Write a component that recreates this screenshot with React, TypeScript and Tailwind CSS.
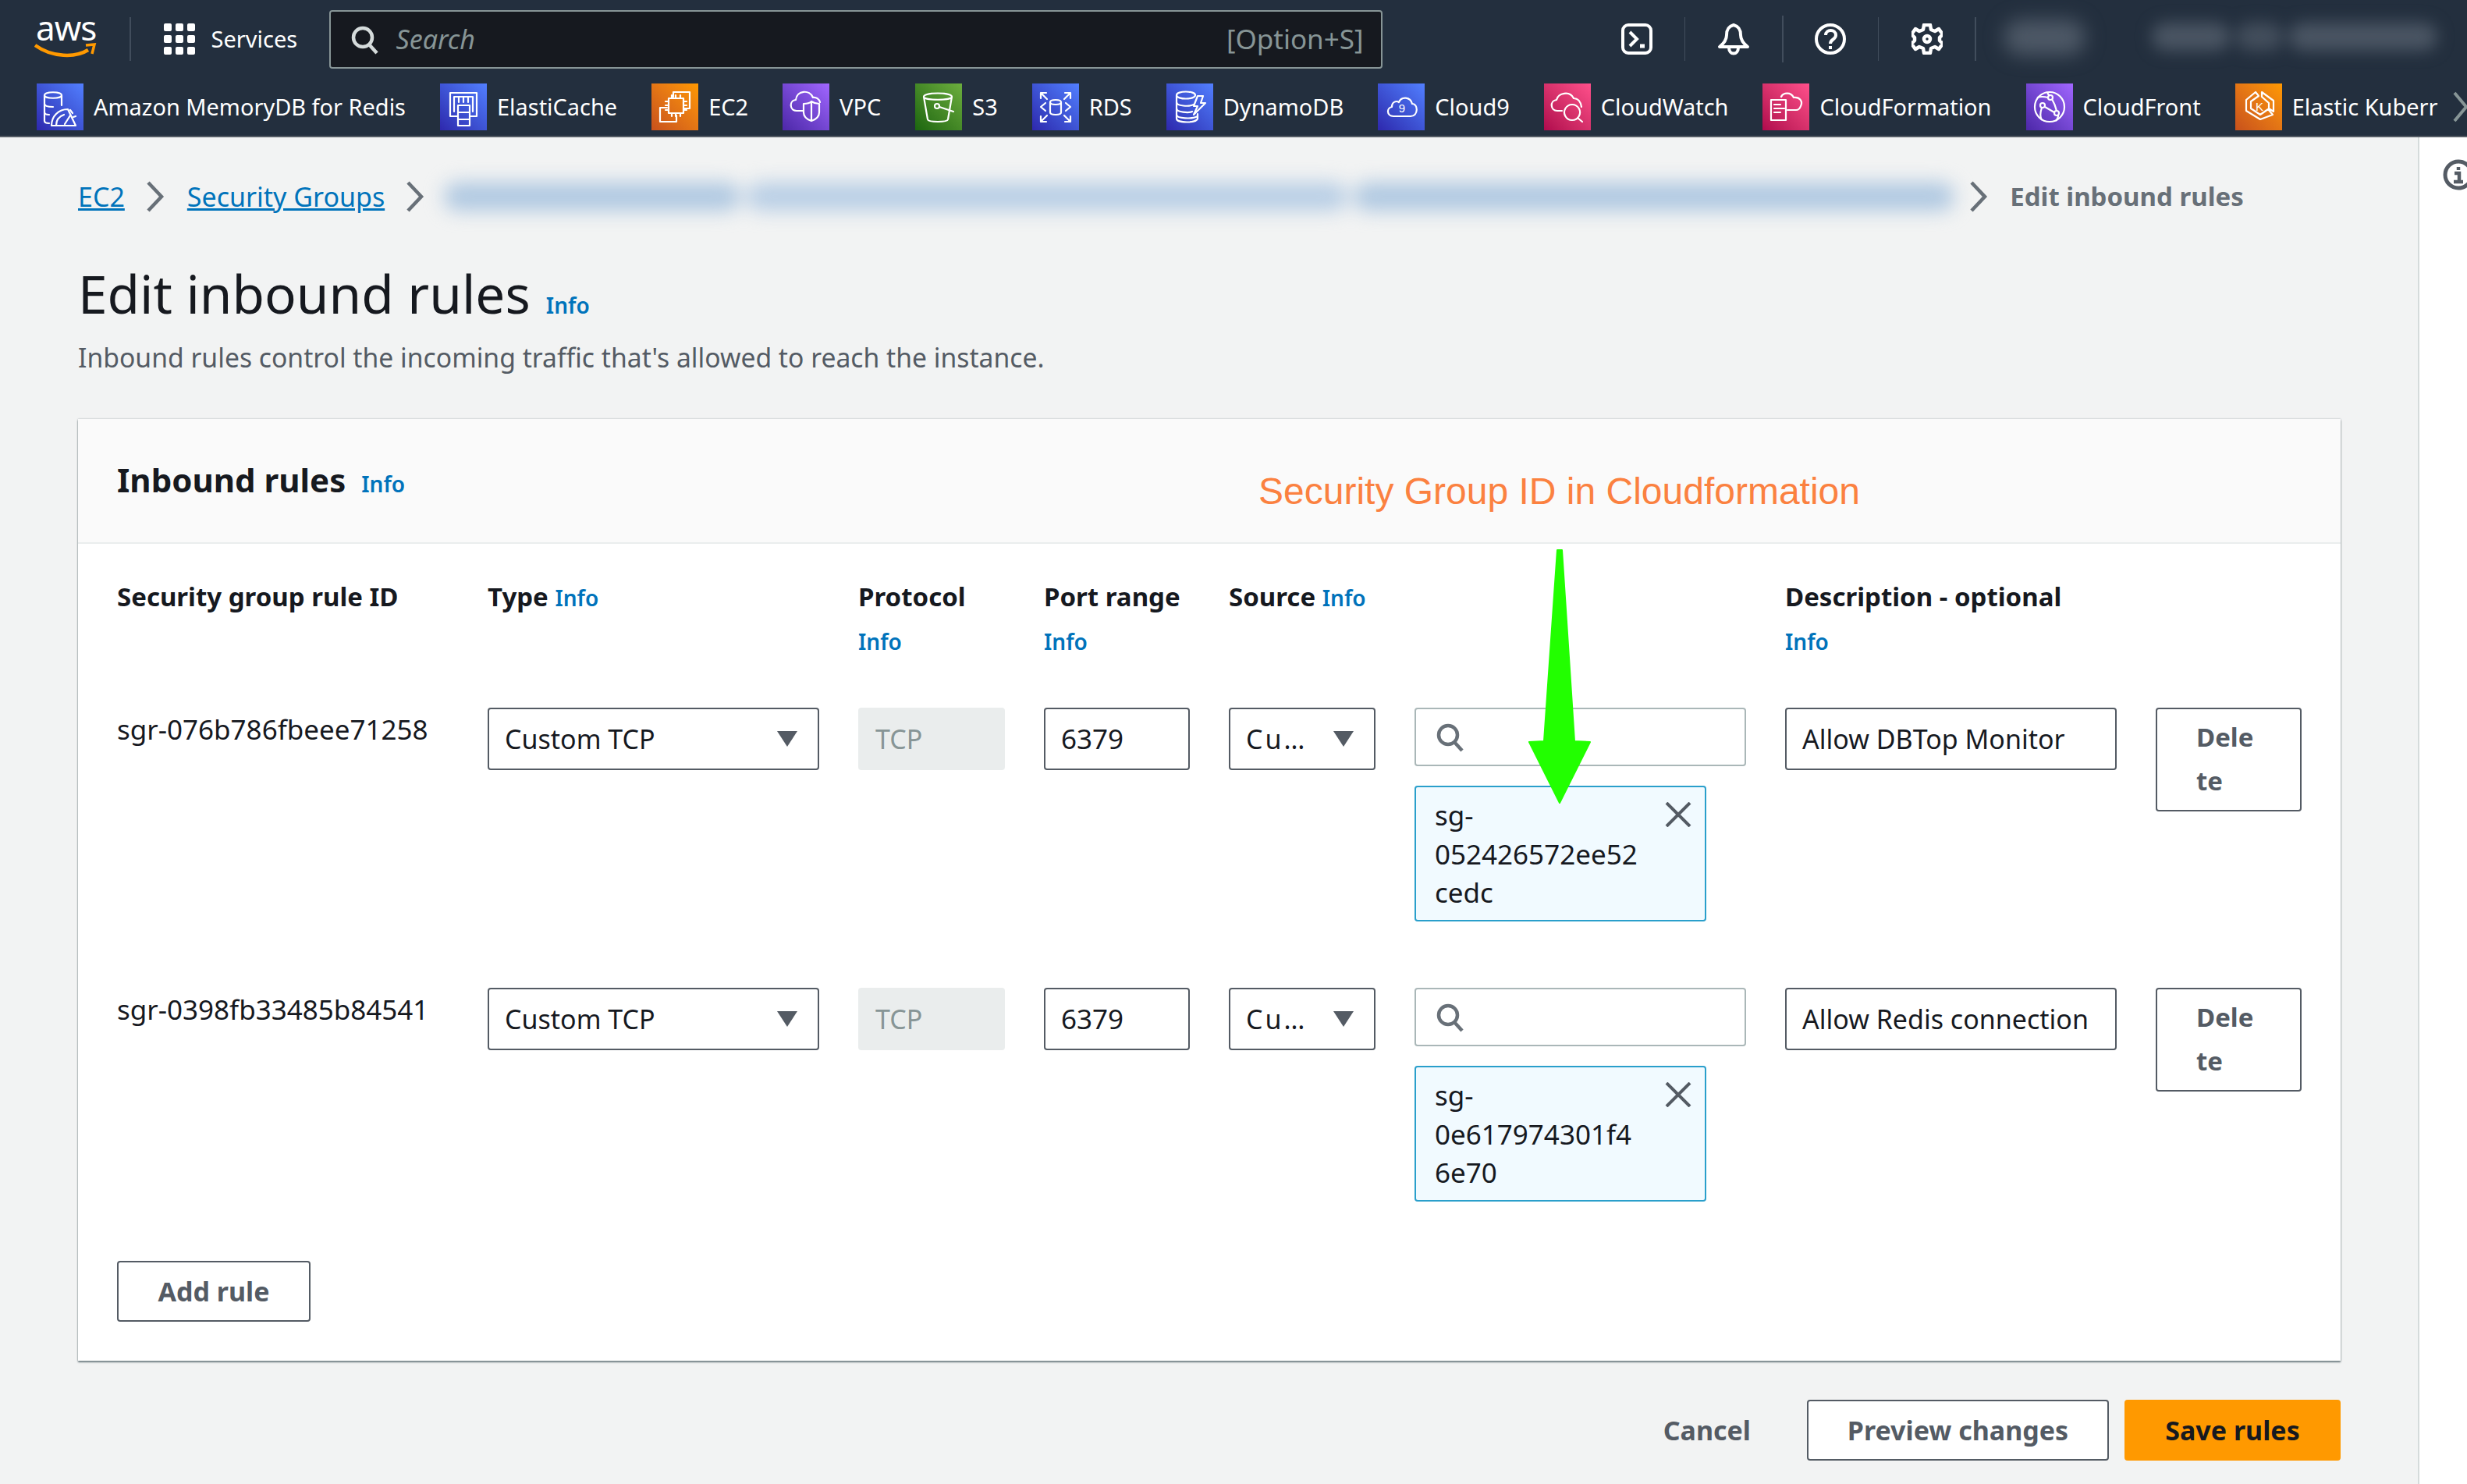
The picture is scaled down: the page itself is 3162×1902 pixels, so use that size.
import React from "react";

const cols = "grid grid-cols-[425px_425px_188px_187px_188px_425px_425px_187px] gap-x-[50px]";

const Info = ({ className = "" }: { className?: string }) => (
  <span className={`text-[#0073bb] text-[28px] font-semibold ${className}`}>Info</span>
);

const Chevron = ({ color = "#687078" }: { color?: string }) => (
  <svg width="24" height="40" viewBox="0 0 24 40" fill="none" stroke={color} strokeWidth="4.5" className="shrink-0">
    <path d="M3 2l17 18L3 38" />
  </svg>
);

const svc = (d: string[], extra?: React.ReactNode) => (
  <svg width="60" height="60" viewBox="0 0 60 60" fill="none" stroke="#fff" strokeWidth="2.2" strokeLinejoin="round" strokeLinecap="round">
    {d.map((p, i) => (
      <path key={i} d={p} />
    ))}
    {extra}
  </svg>
);

const blue = "bg-linear-to-tr from-[#2e27ad] to-[#527fff]";
const orange = "bg-linear-to-tr from-[#c8511b] to-[#ff9900]";
const purple = "bg-linear-to-tr from-[#4d27a8] to-[#a166ff]";
const green = "bg-linear-to-tr from-[#1b660f] to-[#6cae3e]";
const pink = "bg-linear-to-tr from-[#b0084d] to-[#ff4f8b]";

const iconLabel = (t: string, x: number, y: number, size: number) => (
  <text x={x} y={y} fontSize={size} fill="#fff" stroke="none" textAnchor="middle" fontFamily="Liberation Sans, sans-serif">
    {t}
  </text>
);

const services = [
  {
    name: "Amazon MemoryDB for Redis",
    bg: blue,
    icon: svc([
      "M10 15c0-5 22-5 22 0v13M10 15c0 5 22 5 22 0M10 15v33c0 2 3 3 6 3",
      "M10 26c0 3 6 4 11 4M10 37c0 2 3 3 6 3",
      "M19 54c0-12 9-21 21-21l10 21zM19 54h31M25 54c0-7 4-12 10-14",
      "M36 52l7-11M43 34l3 4M47 43l3-1",
    ]),
  },
  {
    name: "ElastiCache",
    bg: blue,
    icon: svc([
      "M13 42V12h34v30h-8M13 42h9M18 36V17h24v19",
      "M24 17v7M30 17v7M36 17v7",
      "M23 28h15v26H23zM23 37h15M23 46h15",
    ]),
  },
  {
    name: "EC2",
    bg: orange,
    icon: svc([
      "M28 17v-6h21v21h-7M20 31h-9v18h21v-8",
      "M22 19h19v19H22zM26 15v4M31 15v4M37 15v4M26 38v4M31 38v4M37 38v4M18 23h4M18 28h4M18 34h4M41 23h4M41 28h4M41 34h4",
    ]),
  },
  {
    name: "VPC",
    bg: purple,
    icon: svc([
      "M26 35h-8c-9 0-10-13-1-14 1-12 18-14 22-3 4-1 8 2 9 6",
      "M27 26c4 0 8-1 10-3 3 2 6 3 10 3v11c0 6-4 9-10 11-6-2-10-5-10-11zM37 23v25",
    ]),
  },
  {
    name: "S3",
    bg: green,
    icon: svc(
      ["M11 17c0-6 36-6 36 0l-5 29c-1 4-25 4-26 0zM11 17c0 5 36 5 36 0", "M31 30l18 6"],
      <circle cx="28" cy="29" r="3" />
    ),
  },
  {
    name: "RDS",
    bg: blue,
    icon: svc([
      "M11 12l8 8M11 12v7M11 12h7M49 12l-8 8M49 12v7M49 12h-7M11 49l8-8M11 49v-7M11 49h7M49 49l-8-8M49 49v-7M49 49h-7",
      "M23 24c0-4 14-4 14 0v13c0 4-14 4-14 0zM23 24c0 4 14 4 14 0",
      "M17 25l-6 5 6 5M43 25l6 5-6 5",
    ]),
  },
  {
    name: "DynamoDB",
    bg: blue,
    icon: svc([
      "M13 15c0-6 24-6 24 0s-24 6-24 0zM13 15v30c0 6 26 6 27 0v-6",
      "M13 24c0 5 16 6 22 3M13 32c0 5 16 6 20 4M13 40c0 5 20 6 27 2",
      "M40 16l-5 13h5l-5 11 15-15h-6l3-9z",
    ]),
  },
  {
    name: "Cloud9",
    bg: blue,
    icon: svc(
      ["M20 42c-9 0-9-11-2-12 0-7 6-8 9-6 3-8 15-7 17 2 8 0 8 16-2 16z"],
      iconLabel("9", 31, 37, 15)
    ),
  },
  {
    name: "CloudWatch",
    bg: pink,
    icon: svc([
      "M23 35h-6c-9 0-10-13-1-14 2-9 17-12 22-2 6 0 9 5 10 11",
      "M36 27a10 10 0 1 0 .1 0zM43 44l6 5",
    ]),
  },
  {
    name: "CloudFormation",
    bg: pink,
    icon: svc([
      "M11 21h19v26H11zM15 27h8M15 32h13M15 37h8",
      "M24 17c2-5 12-7 16 1 8-1 12 5 9 11-1 3-3 5-6 5H32",
    ]),
  },
  {
    name: "CloudFront",
    bg: purple,
    icon: (
      <svg width="60" height="60" viewBox="0 0 60 60" fill="none" stroke="#fff" strokeWidth="2.2">
        <circle cx="30" cy="30" r="19" />
        <path d="M14 18c6-2 10-1 14 0M27 12l3 4M33 20c3 5 5 11 6 15M24 30l12 7M20 31c-2 6-3 11 0 16M41 41c0 3-1 5-3 7" />
        <circle cx="31" cy="18" r="3" />
        <circle cx="21" cy="28" r="3" />
        <circle cx="39" cy="38" r="3" />
      </svg>
    ),
  },
  {
    name: "Elastic Kuberr",
    bg: orange,
    icon: svc(
      ["M26 11L14 21v14l18 11 16-6-6-7-10 7-12-8v-9l10-7zM34 11l15 11v14l-6-4v-7l-9-8z"],
      iconLabel("K", 31, 35, 15)
    ),
  },
];

const Divider = ({ tall = false }: { tall?: boolean }) => (
  <div className={`w-[1.5px] bg-[#414d5c] shrink-0 ${tall ? "h-[60px]" : "h-[56px]"}`} />
);

const TopBar = () => (
  <div className="h-[176px] bg-[#232f3e] border-b-2 border-[#545b64] shrink-0 overflow-hidden text-white">
    <div className="h-[88px] pt-[13px] flex items-start">
      <div className="w-[75px] ml-[46px] h-[62px] relative shrink-0 mt-[4px]">
        <div className="text-[44px] leading-[36px] text-center tracking-[-1px]">aws</div>
        <svg width="80" height="20" viewBox="0 0 80 20" fill="none" className="absolute left-[-2px] top-[38px]">
          <path d="M1 3c22 16 52 16 68 6" stroke="#ff9900" strokeWidth="4.5" />
          <path d="M66 3l11-1-3 12" stroke="#ff9900" strokeWidth="3.5" />
        </svg>
      </div>
      <div className="ml-[45px] mt-[9px]"><Divider /></div>
      <svg width="40" height="40" viewBox="0 0 40 40" fill="#fff" className="ml-[42px] mt-[17px] shrink-0">
        {[0, 15, 30].map((y) =>
          [0, 15, 30].map((x) => <rect key={`${x}-${y}`} x={x} y={y} width="10" height="10" rx="2" />)
        )}
      </svg>
      <div className="ml-[21px] mt-[17px] text-[29px] leading-[40px] w-[112px] whitespace-nowrap">Services</div>
      <div className="ml-[39px] w-[1350px] h-[75px] bg-[#16191f] border-2 border-[#879596] rounded-[4px] flex items-center pl-[26px] pr-[22px] shrink-0">
        <svg width="36" height="38" viewBox="0 0 36 38" fill="none" stroke="#d5dbdb" strokeWidth="4.5">
          <circle cx="15" cy="16" r="12" />
          <path d="M23 25l10 11" />
        </svg>
        <span className="ml-[22px] text-[#879596] text-[34px] italic">Search</span>
        <span className="ml-auto text-[#879596] text-[35px]">[Option+S]</span>
      </div>
      <svg width="40" height="40" viewBox="0 0 40 40" fill="none" stroke="#fff" strokeWidth="4" className="ml-[306px] mt-[17px] shrink-0">
        <rect x="2" y="2" width="36" height="36" rx="7" />
        <path d="M11 11l9 9-9 9" />
        <path d="M24 29h6" strokeWidth="5" />
      </svg>
      <div className="ml-[41px] mt-[9px]"><Divider /></div>
      <svg width="42" height="42" viewBox="0 0 42 42" fill="none" stroke="#fff" strokeWidth="4" strokeLinejoin="round" className="ml-[41px] mt-[16px] shrink-0">
        <path d="M21 3c-7 2-9 6-9 13 0 7-4 11-9 15h36c-5-4-9-8-9-15 0-7-2-11-9-13z" />
        <path d="M15 32c0 10 12 10 12 0" />
      </svg>
      <div className="ml-[41px] mt-[7px]"><Divider tall /></div>
      <svg width="40" height="40" viewBox="0 0 40 40" fill="none" stroke="#fff" strokeWidth="4" className="ml-[40px] mt-[17px] shrink-0">
        <circle cx="20" cy="20" r="18" />
        <path d="M14 15c0-8 13-8 13 0 0 6-7 5-7 11" />
        <path d="M20 29v4" />
      </svg>
      <div className="ml-[41px] mt-[9px]"><Divider /></div>
      <svg width="40" height="40" viewBox="0 0 40 40" fill="none" stroke="#fff" strokeWidth="4.5" strokeLinejoin="round" className="ml-[42px] mt-[17px] shrink-0">
        <path d="M16 2h8l1 6 5 2 5-3 5 7-4 4v4l4 4-5 7-5-3-5 2-1 6h-8l-1-6-5-2-5 3-5-7 4-4v-4l-4-4 5-7 5 3 5-2z" />
        <circle cx="20" cy="20" r="4" />
      </svg>
      <div className="ml-[41px] mt-[9px]"><Divider /></div>
      <div className="ml-[35px] mt-[12px] w-[105px] h-[46px] rounded-full bg-[#4d5866] blur-[12px] shrink-0" />
      <div className="ml-[85px] mt-[16px] flex gap-[8px] shrink-0 blur-[10px]">
        <div className="w-[100px] h-[36px] rounded-full bg-[#4a5563]" />
        <div className="w-[60px] h-[36px] rounded-full bg-[#434e5c]" />
        <div className="w-[190px] h-[36px] rounded-full bg-[#4a5563]" />
      </div>
    </div>
    <div className="relative h-[86px] pt-[19px] pl-[47px] flex items-start gap-[44px] overflow-hidden">
      {services.map((s) => (
        <div key={s.name} className="flex items-center gap-[13px] h-[60px] shrink-0">
          <div className={`w-[60px] h-[60px] shrink-0 ${s.bg}`}>{s.icon}</div>
          <span className="text-[28.95px] leading-[40px] whitespace-nowrap">{s.name}</span>
        </div>
      ))}
      <div className="absolute right-[-2px] top-[29px]">
        <svg width="20" height="40" viewBox="0 0 20 40" fill="none" stroke="#879596" strokeWidth="4">
          <path d="M2 2l15 18L2 38" />
        </svg>
      </div>
    </div>
  </div>
);

const Select = ({ label, spaced = false }: { label: string; spaced?: boolean }) => (
  <div className="h-[80px] border-2 border-[#545b64] rounded-[4px] bg-white flex items-center pl-[20px] pr-[26px] text-[34px] text-[#16191f]">
    <span className={`whitespace-nowrap ${spaced ? "tracking-[3px]" : ""}`}>{label}</span>
    <svg width="26" height="20" viewBox="0 0 26 20" fill="#545b64" className="ml-auto shrink-0">
      <path d="M0 0h26L13 20z" />
    </svg>
  </div>
);

const TextBox = ({ value, size }: { value: string; size: string }) => (
  <div className={`h-[80px] border-2 border-[#545b64] rounded-[4px] bg-white flex items-center px-[20px] ${size} text-[#16191f] whitespace-nowrap overflow-hidden`}>
    {value}
  </div>
);

const Rule = ({ id, port, tag, desc }: { id: string; port: string; tag: string[]; desc: string }) => (
  <div className={`${cols} items-start`}>
    <div className="text-[35px] leading-[56px] text-[#16191f] whitespace-nowrap">{id}</div>
    <Select label="Custom TCP" />
    <div className="h-[80px] rounded-[4px] bg-[#eaeded] flex items-center px-[22px] text-[34px] text-[#879596]">TCP</div>
    <TextBox value={port} size="text-[35px]" />
    <Select label="Cu…" spaced />
    <div>
      <div className="h-[75px] border-2 border-[#aab7b8] rounded-[4px] bg-white flex items-center pl-[26px]">
        <svg width="36" height="38" viewBox="0 0 36 38" fill="none" stroke="#687078" strokeWidth="4.5">
          <circle cx="15" cy="16" r="12" />
          <path d="M23 25l10 11" />
        </svg>
      </div>
      <div className="relative mt-[25px] w-[374px] h-[174px] border-2 border-[#2a9fcb] rounded-[4px] bg-[#f1faff] pl-[24px] pt-[11px] text-[35px] leading-[49.5px] text-[#16191f]">
        {tag.map((t) => (
          <div key={t}>{t}</div>
        ))}
        <svg width="34" height="32" viewBox="0 0 34 32" fill="none" stroke="#545b64" strokeWidth="4" className="absolute right-[17px] top-[19px]">
          <path d="M2 1l30 30M32 1L2 31" />
        </svg>
      </div>
    </div>
    <TextBox value={desc} size="text-[34px]" />
    <div className="h-[133px] border-2 border-[#545b64] rounded-[4px] bg-white pl-[50px] pt-[8px] text-[33px] leading-[56px] font-bold text-[#545b64]">
      <div>Dele</div>
      <div>te</div>
    </div>
  </div>
);

export default function App() {
  return (
    <div className="w-[3162px] h-[1902px] overflow-hidden flex flex-col bg-[#f2f3f3] font-['Noto_Sans',sans-serif]">
      <TopBar />
      <div className="flex flex-1 min-h-0">
        <div className="w-[3099px] shrink-0 pl-[100px] pr-[99px] relative">
          <div className="h-[56px] mt-[48px] flex items-center text-[34px] whitespace-nowrap">
            <span className="text-[#0073bb] underline">EC2</span>
            <span className="ml-[27px]"><Chevron /></span>
            <span className="ml-[29px] text-[#0073bb] underline">Security Groups</span>
            <span className="ml-[27px]"><Chevron /></span>
            <div className="ml-[25px] w-[1930px] flex gap-[8px] blur-[12px] shrink-0">
              <div className="w-[380px] h-[36px] shrink-0 rounded-full bg-[#afc8e1]" />
              <div className="w-[770px] h-[36px] shrink-0 rounded-full bg-[#b8cee5]" />
              <div className="w-[770px] h-[36px] shrink-0 rounded-full bg-[#afc8e1]" />
            </div>
            <span className="ml-[25px]"><Chevron /></span>
            <span className="ml-[28px] text-[33px] font-bold text-[#687078]">Edit inbound rules</span>
          </div>
          <div className="mt-[50px] flex items-baseline">
            <span className="text-[67.5px] leading-[92px] text-[#16191f]">Edit inbound rules</span>
            <Info className="ml-[20px]" />
          </div>
          <div className="mt-[12px] text-[33.7px] leading-[48px] text-[#545b64]">
            Inbound rules control the incoming traffic that's allowed to reach the instance.
          </div>
          <div className="mt-[55px] bg-white shadow-[0_2px_2px_rgba(0,28,36,0.5),0_0_2px_rgba(0,28,36,0.3)] relative">
            <div className="h-[160px] bg-[#fafafa] border-b-2 border-[#eaeded] pl-[50px] pt-[50px] flex items-baseline relative">
              <span className="text-[42px] leading-[56px] font-bold text-[#16191f]">Inbound rules</span>
              <Info className="ml-[20px]" />
              <span className="absolute left-[1513px] top-[63px] text-[48px] leading-[60px] text-[#fb8140] font-['Liberation_Sans',sans-serif] whitespace-nowrap">
                Security Group ID in Cloudformation
              </span>
            </div>
            <div className="px-[50px] pt-[40px] pb-[50px]">
              <div className={`${cols} h-[170px] text-[33px] leading-[56px] font-bold text-[#16191f]`}>
                <div className="whitespace-nowrap">Security group rule ID</div>
                <div>Type <Info /></div>
                <div>Protocol<br /><Info /></div>
                <div className="whitespace-nowrap">Port range<br /><Info /></div>
                <div className="whitespace-nowrap">Source <Info /></div>
                <div />
                <div>Description - optional<br /><Info /></div>
                <div />
              </div>
              <div className="flex flex-col gap-y-[85px]">
                <Rule id="sgr-076b786fbeee71258" port="6379" tag={["sg-", "052426572ee52", "cedc"]} desc="Allow DBTop Monitor" />
                <Rule id="sgr-0398fb33485b84541" port="6379" tag={["sg-", "0e617974301f4", "6e70"]} desc="Allow Redis connection" />
              </div>
              <div className="mt-[76px] w-[248px] h-[78px] border-2 border-[#545b64] rounded-[4px] flex items-center justify-center text-[34px] font-bold text-[#545b64]">
                Add rule
              </div>
            </div>
            {/* green arrow annotation */}
            <svg width="90" height="340" viewBox="0 0 90 340" className="absolute left-[1853px] top-[165px]">
              <path d="M43 3l6 0 16 245 20 1-39 78-39-78 19-1z" fill="#22ff00" stroke="#22ff00" strokeWidth="2" strokeLinejoin="round" />
            </svg>
          </div>
          <div className="mt-[50px] flex items-center justify-end text-[34px] font-bold text-[#545b64]">
            <span className="mr-[72px]">Cancel</span>
            <div className="w-[387px] h-[78px] border-2 border-[#545b64] rounded-[4px] bg-white flex items-center justify-center">Preview changes</div>
            <div className="ml-[20px] w-[277px] h-[78px] rounded-[4px] bg-[#ff9900] text-[#16191f] flex items-center justify-center">Save rules</div>
          </div>
        </div>
        <div className="flex-1 bg-white border-l-2 border-[#d5dbdb] pl-[30px] pt-[28px] overflow-hidden">
          <svg width="40" height="40" viewBox="0 0 40 40" fill="none" stroke="#545b64" strokeWidth="5">
            <circle cx="20" cy="20" r="17" />
            <path d="M20 10v4M15 18h6v11M14 29h12" strokeWidth="4.5" />
          </svg>
        </div>
      </div>
    </div>
  );
}
